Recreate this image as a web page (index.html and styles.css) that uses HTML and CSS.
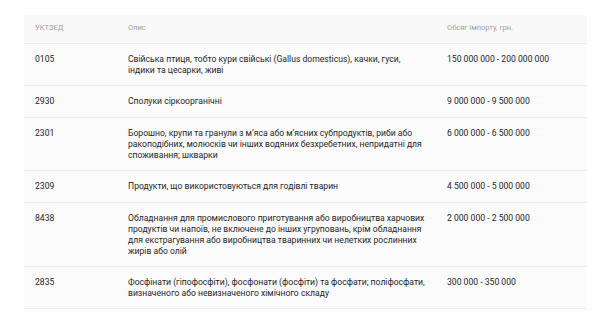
FILE: index.html
```html
<!DOCTYPE html>
<html lang="uk">
<head>
<meta charset="utf-8">
<link rel="stylesheet" href="styles.css">
</head>
<body>
<div class="card">
  <div class="row head">
    <div class="cell">УКТЗЕД</div>
    <div class="cell desc">Опис</div>
    <div class="cell">Обсяг імпорту, грн.</div>
  </div>
  <div class="row">
    <div class="cell">0105</div>
    <div class="cell desc">Свійська птиця, тобто кури свійські (Gallus domesticus), качки, гуси, індики та цесарки, живі</div>
    <div class="cell">150 000 000 - 200 000 000</div>
  </div>
  <div class="row">
    <div class="cell">2930</div>
    <div class="cell desc">Сполуки сіркоорганічні</div>
    <div class="cell">9 000 000 - 9 500 000</div>
  </div>
  <div class="row">
    <div class="cell">2301</div>
    <div class="cell desc">Борошно, крупи та гранули з м’яса або м’ясних субпродуктів, риби або ракоподібних, молюсків чи інших водяних безхребетних, непридатні для споживання; шкварки</div>
    <div class="cell">6 000 000 - 6 500 000</div>
  </div>
  <div class="row">
    <div class="cell">2309</div>
    <div class="cell desc">Продукти, що використовуються для годівлі тварин</div>
    <div class="cell">4 500 000 - 5 000 000</div>
  </div>
  <div class="row">
    <div class="cell">8438</div>
    <div class="cell desc">Обладнання для промислового приготування або виробництва харчових продуктів чи напоїв, не включене до інших угруповань, крім обладнання для екстрагування або виробництва тваринних чи нелетких рослинних жирів або олій</div>
    <div class="cell">2 000 000 - 2 500 000</div>
  </div>
  <div class="row">
    <div class="cell">2835</div>
    <div class="cell desc">Фосфінати (гіпофосфіти), фосфонати (фосфіти) та фосфати; поліфосфати, визначеного або невизначеного хімічного складу</div>
    <div class="cell">300 000 - 350 000</div>
  </div>
</div>
</body>
</html>
```
FILE: styles.css
```css
html, body {
  margin: 0;
  padding: 0;
  background: #ffffff;
}
body {
  font-family: Roboto, "Noto Sans", sans-serif;
  color: #262626;
  font-size: 8.6px;
  line-height: 11px;
}
.card {
  margin: 15px 13px 0 24px;
  background: #fbfbfb;
}
.row {
  display: grid;
  grid-template-columns: 93px 319px 1fr;
  border-bottom: 1px solid #ececec;
}
.cell {
  padding: 10px 11px 9.4px;
}
.cell.desc {
  padding-right: 9px;
}
.head {
  background: #f9f9f9;
}
.head .cell {
  padding-top: 6.5px;
  padding-bottom: 10.5px;
  font-size: 7.5px;
  color: #a0a0a0;
}
```
